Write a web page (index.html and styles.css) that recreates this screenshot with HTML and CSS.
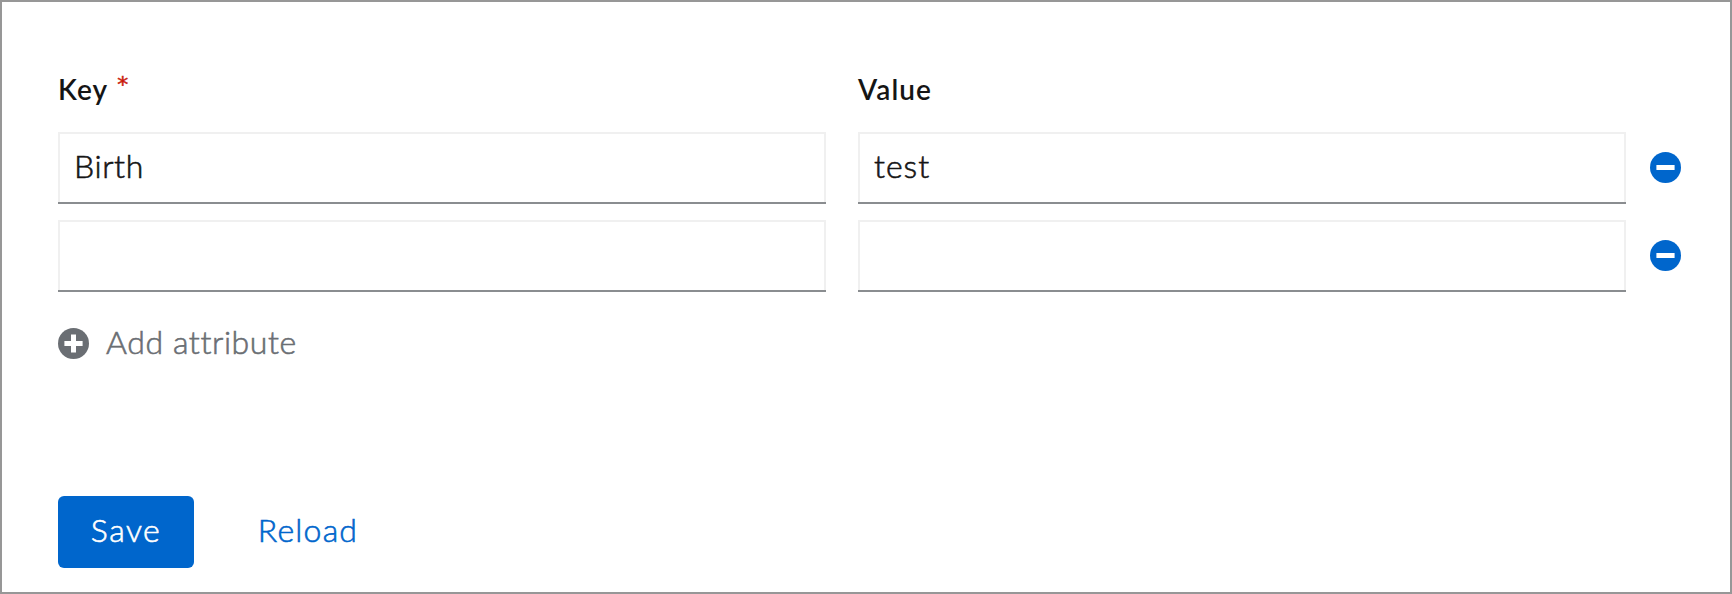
FILE: index.html
```html
<!DOCTYPE html>
<html lang="en">
<head>
<meta charset="utf-8">
<title>Attributes</title>
<link rel="stylesheet" href="styles.css">
</head>
<body>
<form class="panel">
  <div class="grid">
    <div class="label key">Key<span class="required">*</span></div>
    <div class="label value">Value</div>
    <span></span>
    <input class="field birth" type="text" value="Birth">
    <input class="field test" type="text" value="test">
    <svg class="icon minus" viewBox="0 0 31 31"><circle cx="15.5" cy="15.5" r="15.5"/><rect class="mark" x="6.4" y="13" width="18.2" height="5" rx=".5"/></svg>
    <input class="field" type="text">
    <input class="field" type="text">
    <svg class="icon minus" viewBox="0 0 31 31"><circle cx="15.5" cy="15.5" r="15.5"/><rect class="mark" x="6.4" y="13" width="18.2" height="5" rx=".5"/></svg>
  </div>
  <div class="add">
    <svg class="icon" viewBox="0 0 31 31"><circle cx="15.5" cy="15.5" r="15.5"/><path class="mark" d="M13 6.4h5V13h6.6v5H18v6.6h-5V18H6.4v-5H13z"/></svg>
    <span class="add-text">Add attribute</span>
  </div>
  <div class="actions">
    <button class="button save" type="button">Save</button>
    <button class="button reload" type="button">Reload</button>
  </div>
</form>
</body>
</html>
```
FILE: styles.css
```css
* { box-sizing: border-box; }
body { margin: 0; background: #fff; font-family: Lato, "Open Sans", sans-serif; font-weight: 300; font-variant-ligatures: none; color: #151515; }
.panel { height: 594px; border: 2px solid #979797; padding: 68px 0 0 56px; }
.grid { display: grid; grid-template-columns: 768px 768px 31px; column-gap: 32px; row-gap: 16px; }
.label { height: 46px; font-size: 28px; line-height: 38px; font-weight: 600; letter-spacing: 1.1px; white-space: nowrap; }
.key { display: flex; }
.required { margin: 5px 0 0 9px; color: #c9190b; font-family: "DejaVu Sans", sans-serif; font-size: 22px; font-weight: 400; line-height: 20px; letter-spacing: 0; -webkit-text-stroke: .5px currentColor; }
.field { width: 768px; height: 72px; margin: 0; padding: 0 16px 6px; border: 0; border-radius: 0; background: #fff; box-shadow: inset 0 -2px #8a8d90, inset 0 0 0 2px #f0f0f0; font: inherit; font-size: 32px; letter-spacing: .6px; color: inherit; outline: 0; -webkit-text-stroke: .6px currentColor; }
.test { letter-spacing: 1px; }
.icon { display: block; width: 31px; height: 31px; flex: none; fill: #6a6e73; }
.minus { margin: 20px 0 0 -8px; fill: #06c; }
.mark { fill: #fff; }
.add { display: flex; align-items: center; gap: 17px; height: 48px; margin-top: 27px; color: #6a6e73; font-size: 32px; line-height: 48px; }
.add-text { padding-bottom: 2px; letter-spacing: .6px; white-space: nowrap; -webkit-text-stroke: .6px currentColor; }
.actions { display: flex; gap: 32px; margin-top: 129px; }
.button { height: 72px; padding: 0 0 5px; border: 0; border-radius: 6px; font: inherit; font-size: 32px; -webkit-text-stroke: .6px currentColor; }
.save { width: 136px; background: #06c; color: #fff; letter-spacing: 1.5px; }
.reload { width: 164px; background: none; color: #06c; letter-spacing: 1.2px; }
```
